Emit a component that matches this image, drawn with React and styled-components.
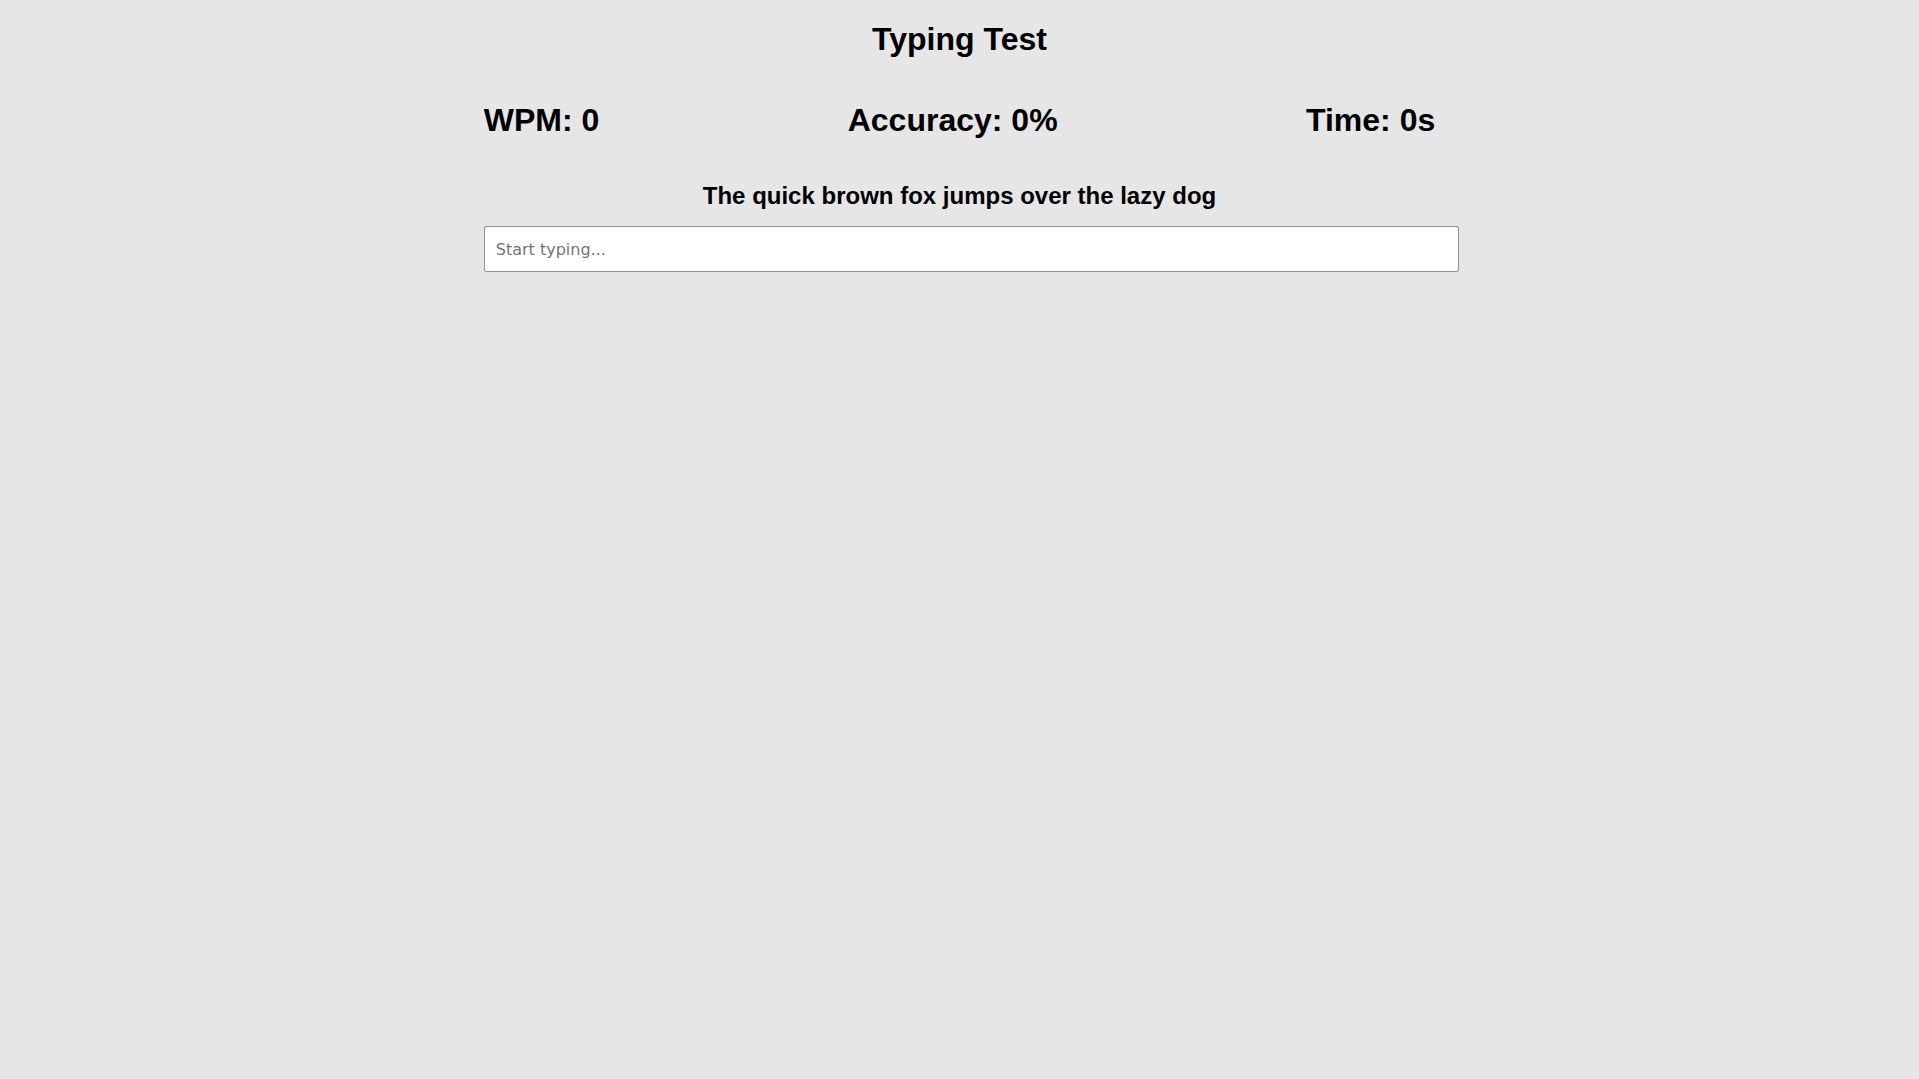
import React, { useState } from 'react';
import styled, { createGlobalStyle } from 'styled-components';

const GlobalStyle = createGlobalStyle`
    body {
        margin: 0;
        background-color: #e6e6e6;
        font-family: "Liberation Sans", Arial, sans-serif;
        color: #000000;
    }
`;

const SENTENCE = 'The quick brown fox jumps over the lazy dog';

export default function App() {
    const [text, setText] = useState('');

    return (
        <>
            <GlobalStyle />
            <Page>
                <Title>Typing Test</Title>
                <Container>
                    <StatsRow>
                        <Stat>WPM: 0</Stat>
                        <Stat>Accuracy: 0%</Stat>
                        <Stat>Time: 0s</Stat>
                    </StatsRow>
                    <Sentence>{SENTENCE}</Sentence>
                    <TypingInput
                        type="text"
                        placeholder="Start typing..."
                        value={text}
                        onChange={(e) => setText(e.target.value)}
                    />
                </Container>
            </Page>
        </>
    );
}

const Page = styled.div`
    padding: 21px 8px 0;
    min-height: 100vh;
    box-sizing: border-box;
`;

const Title = styled.h1`
    margin: 0;
    text-align: center;
    font-size: 32px;
    font-weight: 700;
`;

const Container = styled.div`
    width: 50%;
    margin: 0 auto;
`;

const StatsRow = styled.div`
    display: flex;
    justify-content: space-between;
    margin-top: 44px;
`;

const Stat = styled.div`
    font-size: 32px;
    font-weight: 700;
`;

const Sentence = styled.p`
    margin: 43px 0 16px;
    text-align: center;
    font-size: 24px;
    font-weight: 700;
`;

const TypingInput = styled.input`
    display: block;
    width: 100%;
    padding: 13px 11px 12px;
    border: 1px solid #8f8f9d;
    border-radius: 2px;
    background: #ffffff;
    font-family: "DejaVu Sans", Verdana, sans-serif;
    font-size: 16px;
    outline: none;

    &::placeholder {
        color: #757575;
    }
`;
